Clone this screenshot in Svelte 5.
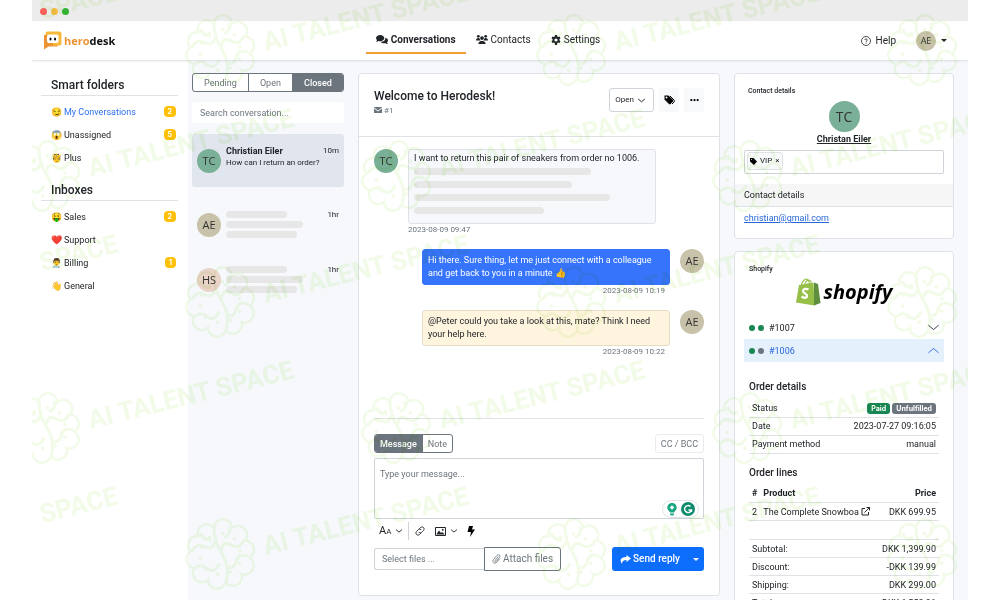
<script>
  const smart = [
    { icon: '😏', label: 'My Conversations', count: 2, active: true },
    { icon: '😱', label: 'Unassigned', count: 5 },
    { icon: '🤴', label: 'Plus' }
  ];
  const inboxes = [
    { icon: '🤑', label: 'Sales', count: 2 },
    { icon: '❤️', label: 'Support' },
    { icon: '👨‍⚕️', label: 'Billing', count: 1 },
    { icon: '👋', label: 'General' }
  ];
  const marks = [];
  for (let row = 0; row < 5; row++) {
    for (let col = -1; col < 3; col++) {
      marks.push({ x: (row % 2 ? 13 : 188) + col * 351, y: 50 + row * 126 });
    }
  }
  const lobes = [[-8, -23], [9, -24], [22, -14], [25, 2], [21, 17], [7, 25], [-9, 24], [-22, 14], [-25, -1], [-20, -14]];
</script>

{#snippet folders(title, items)}
  <section class="folders">
    <h2>{title}</h2>
    <ul>
      {#each items as item}
        <li>
          <a href="#folder" class:active={item.active}><span class="emoji">{item.icon}</span>{item.label}</a>
          {#if item.count}<span class="count">{item.count}</span>{/if}
        </li>
      {/each}
    </ul>
  </section>
{/snippet}

{#snippet chevron(size, up = false, weight = 1.3)}
  <svg width={size} height={size} viewBox="0 0 16 16" fill="none" stroke="currentColor" stroke-width={weight} stroke-linecap="round" stroke-linejoin="round">
    <path d={up ? 'M1 11l7-6 7 6' : 'M1 5l7 6 7-6'} />
  </svg>
{/snippet}

<div class="window">
  <div class="titlebar"><i class="red"></i><i class="yellow"></i><i class="green"></i></div>

  <header>
    <a class="brand" href="#home">
      <svg width="19" height="19" viewBox="0 0 38 38">
        <path fill="#ee9334" d="M2 8h8v16h20v4a3 3 0 0 1-3 3H11l-9 6z" />
        <path fill="#f6b93b" d="M9 1h24a4 4 0 0 1 4 4v20a4 4 0 0 1-4 4H20v-5h8V8H5V5a4 4 0 0 1 4-4z" />
        <rect x="8" y="7" width="23" height="17" rx="4" fill="#fff" />
        <ellipse cx="15" cy="16" rx="2" ry="3" /><ellipse cx="24" cy="16" rx="2" ry="3" />
      </svg>
      <span><b>hero</b>desk</span>
    </a>
    <nav>
      <a class="current" href="#conversations">
        <svg width="12" height="11" viewBox="0 0 26 22"><path fill="currentColor" d="M9 1c5 0 9 3 9 7s-4 7-9 7c-1 0-3 0-4-1-1 1-3 2-5 2 1-1 2-3 2-4-1-1-2-3-2-4 0-4 4-7 9-7zm11 6c4 1 6 3 6 6 0 2-1 3-2 4 0 1 1 3 2 4-2 0-4-1-5-2-5 1-9 0-11-3 7 0 11-4 10-9z" /></svg>
        Conversations
      </a>
      <a href="#contacts">
        <svg width="12" height="11" viewBox="0 0 26 22" fill="currentColor"><circle cx="5" cy="4" r="3" /><circle cx="21" cy="4" r="3" /><circle cx="13" cy="8" r="4" /><path d="M0 13c0-3 2-5 5-5 1 0 2 0 3 1 0 2 1 3 2 4zm26 0c0-3-2-5-5-5-1 0-2 0-3 1 0 2-1 3-2 4zM5 21c0-4 3-7 6-7h4c3 0 6 3 6 7z" /></svg>
        Contacts
      </a>
      <a href="#settings">
        <svg width="10" height="10" viewBox="0 0 20 20"><path fill="currentColor" fill-rule="evenodd" d="M8 0h4l.6 3 1.600.9L17 3l2 3.500-2.200 2v2L19 12.500l-2 3.500-2.800-1-1.600 1L12 20H8l-.6-4-1.600-1L3 16l-2-3.500 2.200-2v-2L1 6.500 3 3l2.800.9L7.400 3zM10 6.800a3.200 3.200 0 1 0 0 6.400 3.200 3.200 0 0 0 0-6.400z" /></svg>
        Settings
      </a>
    </nav>
    <div class="account">
      <a href="#help"><svg width="10" height="10" viewBox="0 0 20 20" fill="none" stroke="currentColor" stroke-width="1.600"><circle cx="10" cy="10" r="9" /><path d="M7.500 8c0-3 5-3 5 0 0 2-2.500 2-2.500 4M10 13.500v2" /></svg>Help</a>
      <button class="me" aria-label="Account"><span class="avatar small sand">AE</span><span class="caret"></span></button>
    </div>
  </header>

  <div class="body">
    <aside class="sidebar">
      {@render folders('Smart folders', smart)}
      {@render folders('Inboxes', inboxes)}
    </aside>

    <section class="list">
      <div class="tabs"><button>Pending</button><button>Open</button><button class="on">Closed</button></div>
      <input class="search" type="search" aria-label="Search conversation" placeholder="Search conversation..." />
      <article class="thread selected">
        <span class="avatar mint">TC</span>
        <div class="grow"><strong>Christian Eiler</strong><p>How can I return an order?</p></div>
        <time>10m</time>
      </article>
      {#each [['AE', 'sand'], ['HS', 'rose']] as [who, tone]}
        <article class="thread">
          <span class="avatar {tone}">{who}</span>
          <div class="grow bars"><i style="width:61px"></i><i style="width:77px"></i><i style="width:71px"></i></div>
          <time>1hr</time>
        </article>
      {/each}
    </section>

    <main class="card">
      <div class="head">
        <div class="grow">
          <h1>Welcome to Herodesk!</h1>
          <p><svg width="8" height="6" viewBox="0 0 16 12"><path fill="currentColor" d="M1 0h14l1 1-8 6-8-6zM0 3l8 6 8-6v9H0z" /></svg> #1</p>
        </div>
        <button class="state">Open {@render chevron(7, false, 2.2)}</button>
        <button class="square" aria-label="Tags"><svg width="11" height="10" viewBox="0 0 22 20"><path fill="currentColor" fill-rule="evenodd" d="M1 1h8l9 9c1 1 1 2 0 3l-5 5c-1 1-2 1-3 0L1 9zm4 2a2 2 0 1 0 0 4 2 2 0 0 0 0-4z" /><path d="M12 2l8 8c1 1 1 2 0 4l-4 4" fill="none" stroke="currentColor" stroke-width="2" /></svg></button>
        <button class="square" aria-label="More"><svg width="9" height="4" viewBox="0 0 20 8" fill="currentColor"><circle cx="3" cy="4" r="2.500" /><circle cx="10" cy="4" r="2.500" /><circle cx="17" cy="4" r="2.500" /></svg></button>
      </div>

      <div class="messages">
        <div class="msg">
          <span class="avatar mint">TC</span>
          <div class="wrap">
            <div class="bubble long"><p>I want to return this pair of sneakers from order no 1006.</p>
              <div class="bars wide"><i style="width:75%"></i><i style="width:67%"></i><i style="width:83%"></i><i style="width:55%"></i></div></div>
            <time>2023-08-09 09:47</time>
          </div>
        </div>
        <div class="msg out">
          <div class="wrap"><div class="bubble blue"><p>Hi there. Sure thing, let me just connect with a colleague and get back to you in a minute <span class="emoji">👍</span></p></div><time>2023-08-09 10:19</time></div>
          <span class="avatar sand">AE</span>
        </div>
        <div class="msg out">
          <div class="wrap"><div class="bubble cream"><p>@Peter could you take a look at this, mate? Think I need your help here.</p></div><time>2023-08-09 10:22</time></div>
          <span class="avatar sand">AE</span>
        </div>
      </div>

      <form class="composer">
        <div class="row">
          <div class="tabs compact"><button type="button" class="on">Message</button><button type="button">Note</button></div>
          <button type="button" class="cc">CC / BCC</button>
        </div>
        <div class="editor">
          <textarea aria-label="Message" placeholder="Type your message..."></textarea>
          <span class="helper">
            <svg width="12" height="14" viewBox="0 0 24 28"><path fill="#15a683" d="M12 2a9 9 0 0 1 6 16l-2 3H8l-2-3A9 9 0 0 1 12 2zM8 23h8v2l-2 2h-4l-2-2z" /><path fill="#fff" d="M12 6l2 3 3 2-3 2-2 3-2-3-3-2 3-2z" /></svg>
            <svg width="14" height="14" viewBox="0 0 28 28"><circle cx="14" cy="14" r="14" fill="#0d8a6b" /><path d="M19 9a7 7 0 1 0 2 7H15m6-1v5" fill="none" stroke="#fff" stroke-width="2.800" /></svg>
          </span>
        </div>
        <div class="tools">
          <button type="button" aria-label="Text size"><span class="aa">A<small>A</small></span>{@render chevron(6, false, 2.5)}</button>
          <span class="rule"></span>
          <button type="button" aria-label="Link"><svg width="10" height="10" viewBox="0 0 20 20" fill="none" stroke="currentColor" stroke-width="1.700" stroke-linecap="round"><path d="M8 6l3-3a4.200 4.200 0 0 1 6 6l-4 4a4 4 0 0 1-5 0M12 14l-3 3a4.200 4.200 0 0 1-6-6l4-4a4 4 0 0 1 5 0" /></svg></button>
          <button type="button" aria-label="Image"><svg width="11" height="9" viewBox="0 0 22 18"><path d="M1 1h20v16H1z" fill="none" stroke="currentColor" stroke-width="2" /><path fill="currentColor" d="M3 14l5-7 4 5 2-2 5 4v1H3z" /><circle cx="15.500" cy="5.500" r="1.800" fill="currentColor" /></svg>{@render chevron(6, false, 2.5)}</button>
          <button type="button" aria-label="Quick reply"><svg width="8" height="11" viewBox="0 0 16 22"><path fill="#000" d="M4 0h8l-2 7h6L6 22l2-10H1z" /></svg></button>
        </div>
        <div class="row">
          <div class="files"><input type="text" aria-label="Files" placeholder="Select files ..." /><button type="button"><svg width="9" height="10" viewBox="0 0 18 20" fill="none" stroke="currentColor" stroke-width="1.700" stroke-linecap="round"><path d="M12 6l-6 7c-1 2 1 3 2 2l7-8c3-4-2-7-5-4l-7 8c-4 5 2 10 6 6l6-7" /></svg>Attach files</button></div>
          <div class="send"><button type="button"><svg width="11" height="9" viewBox="0 0 22 18"><path fill="currentColor" d="M13 0l9 7-9 7v-4C7 10 4 12 4 18-2 10 2 4 13 4z" /></svg>Send reply</button><button type="button" class="drop" aria-label="More send options"><span class="caret"></span></button></div>
        </div>
      </form>
    </main>

    <aside class="details">
      <section class="card contact">
        <h3 class="tag">Contact details</h3>
        <div class="person"><span class="avatar large mint">TC</span><a href="#contact">Christan Eiler</a></div>
        <div class="tagbox"><span class="chip"><svg width="7" height="7" viewBox="0 0 14 14"><path fill="#000" fill-rule="evenodd" d="M0 0h7l7 7-6 7-8-7zm3 2a1 1 0 1 0 0 2 1 1 0 0 0 0-2z" /></svg>VIP<button aria-label="Remove VIP">×</button></span></div>
        <h4>Contact details</h4>
        <a class="mail" href="mailto:christian@gmail.com">christian@gmail.com</a>
      </section>

      <section class="card shop">
        <h3 class="tag">Shopify</h3>
        <div class="shopify">
          <svg width="25" height="28" viewBox="0 0 50 56"><path fill="#95bf47" d="M6 14l29-5 2 46L0 49z" /><path fill="#5e8e3e" d="M36 9l8 3 5 38-13 5z" /><path d="M11 14c2-9 8-14 12-11s4 6 4 9M17 13c3-9 10-13 14-4" fill="none" stroke="#95bf47" stroke-width="2.200" /><path d="M25 23c-5-3-11-1-11 3 0 5 9 5 8 10-1 5-7 4-11 1" fill="none" stroke="#fff" stroke-width="4.500" /></svg>
          <span>shopify</span>
        </div>
        <button class="order"><i class="dot"></i><i class="dot"></i><span>#1007</span>{@render chevron(11)}</button>
        <button class="order open"><i class="dot"></i><i class="dot grey"></i><span>#1006</span>{@render chevron(11, true)}</button>
        <div class="info">
          <h5>Order details</h5>
          <table><tbody>
            <tr><td>Status</td><td><span class="badge">Paid</span> <span class="badge grey">Unfulfilled</span></td></tr>
            <tr><td>Date</td><td>2023-07-27 09:16:05</td></tr>
            <tr><td>Payment method</td><td>manual</td></tr>
          </tbody></table>
          <h5>Order lines</h5>
          <table class="lines">
            <thead><tr><th>#</th><th>Product</th><th>Price</th></tr></thead>
            <tbody><tr><td>2</td><td>The Complete Snowboa <svg width="9" height="9" viewBox="0 0 18 18" fill="none" stroke="currentColor" stroke-width="2"><path d="M8 3H2v13h13v-6M11 1h6v6M17 1L7 11" /></svg></td><td>DKK 699.95</td></tr></tbody>
          </table>
          <table class="totals"><tbody>
            <tr><td>Subtotal:</td><td>DKK 1,399.90</td></tr>
            <tr><td>Discount:</td><td>-DKK 139.99</td></tr>
            <tr><td>Shipping:</td><td>DKK 299.00</td></tr>
            <tr><td>Total:</td><td>DKK 1,558.91</td></tr>
          </tbody></table>
        </div>
      </section>
    </aside>
  </div>

  <svg class="watermark" aria-hidden="true">
    {#each marks as m}
      <g transform="translate({m.x} {m.y}) rotate(-14)">
        <g fill="none" stroke="#f1fbe8" stroke-width="5">
          {#each lobes as [x, y]}<circle cx={x} cy={y} r="8" />{/each}
        </g>
        <g fill="#fff">
          {#each lobes as [x, y]}<circle cx={x} cy={y} r="8" />{/each}
          <circle r="24" />
        </g>
        <g fill="none" stroke="#f1fbe8" stroke-width="3">
          <path d="M1-29q-4 14 1 29t-3 29M-27-9q7-8 14-2t11-2M27-8q-7 9-14 2t-10 2M-28 8q7-4 12 3t13-2M27 9q-9-6-13 2T3 14M-14-25q1 8 9 9M15-24q1 8-7 9" />
        </g>
        <g fill="#f1fbe8">{#each lobes as [x, y]}<circle cx={x * 0.8} cy={y * 0.8} r="1.800" />{/each}</g>
        <text x="44" y="12">AI TALENT SPACE</text>
      </g>
    {/each}
  </svg>
</div>

<style>
  :global(body) { margin: 0; background: #fff; }
  * { box-sizing: border-box; }
  h1, h2, h3, h4, h5, p, ul { margin: 0; padding: 0; font-weight: 500; }
  p, ul { font-weight: 400; }
  ul { list-style: none; }
  button, input, textarea { font: inherit; color: inherit; margin: 0; }
  button { background: none; border: 0; padding: 0; cursor: pointer; }
  a { color: inherit; text-decoration: none; }
  svg { flex: none; }
  .window { position: relative; height: 100vh; margin: 0 32px; display: flex; flex-direction: column; overflow: hidden; background: #f6f8fb; color: #212529; font: 9px/14px Roboto, sans-serif; border-radius: 0 0 2px 2px; }
  .titlebar { display: flex; gap: 4px; align-items: center; height: 21px; flex: none; padding: 1px 8px 0; background: #ececec; }
  .titlebar i { width: 7px; height: 7px; border-radius: 50%; }
  .red { background: #f9615a; } .yellow { background: #f7bd45; } .green { background: #35b233; }
  header { display: grid; grid-template-columns: 1fr auto 1fr; align-items: center; height: 39px; flex: none; padding: 0 21px 0 11px; background: #fff; box-shadow: 0 1px 2px #d9dce3; z-index: 1; }
  .brand { display: flex; align-items: center; gap: 2px; font: 700 11px/16px "Open Sans", sans-serif; color: #111; }
  .brand b { color: #ee9334; font-weight: 700; }
  nav { display: flex; align-self: end; margin: 0 14px 6px 0; font-size: 10px; }
  nav a { display: flex; align-items: center; gap: 3px; height: 33px; padding: 6px 10px 0; border-bottom: 2px solid transparent; }
  .current { font-weight: 700; border-color: #f3a033; }
  .account { justify-self: end; display: flex; align-items: center; gap: 20px; font-size: 10px; }
  .account a { display: flex; align-items: center; gap: 5px; }
  .me { display: flex; align-items: center; gap: 5px; }
  .caret { border: 3px solid transparent; border-top-color: currentColor; border-bottom: 0; }
  .avatar { width: 24px; height: 24px; border-radius: 50%; display: grid; place-items: center; flex: none; font: 11px/12px "Open Sans", sans-serif; color: #333; }
  .small { width: 20px; height: 20px; font-size: 9px; }
  .large { width: 31px; height: 31px; font-size: 14px; }
  .mint { background: #7ab097; } .sand { background: #c7c2a9; } .rose { background: #ead3c8; }
  .body { flex: 1; min-height: 0; display: flex; }
  .sidebar { width: 156px; flex: none; padding: 16px 10px 0 9px; background: #fff; }
  .folders { margin-bottom: 12px; }
  h2 { padding: 0 10px 1px; border-bottom: 1px solid #dee2e6; font-size: 12px; line-height: 18px; }
  .folders ul { padding: 4px 2px 0 10px; }
  .folders li { display: flex; justify-content: space-between; align-items: center; height: 23px; }
  .folders a { display: flex; align-items: center; gap: 2px; }
  .emoji { font-size: 9px; }
  .active { color: #2f6fed; }
  .count { background: #ffc107; color: #fff; font: 700 7px/11px Inter, sans-serif; padding: 0 4px; border-radius: 4px; }
  .list { width: 170px; flex: none; padding: 13px 14px 0 4px; }
  .tabs { display: flex; border: 1px solid #6c757d; border-radius: 3px; overflow: hidden; color: #6c757d; background: #fff; }
  .tabs button { flex: 1 1 auto; height: 17px; border-left: 1px solid #6c757d; }
  .tabs button:first-child { border-left: 0; }
  .tabs .on { background: #6c757d; color: #fff; font-weight: 500; }
  .search { display: block; width: 100%; height: 21px; margin: 10px 0 11px; padding: 0 8px; border: 0; border-radius: 3px; background: #fff; outline: 0; }
  ::placeholder { color: #6c757d; opacity: 1; }
  .thread { display: flex; gap: 5px; align-items: center; height: 53px; padding: 0 5px; margin-bottom: 2px; border-radius: 3px; font-size: 8px; line-height: 11px; }
  .thread strong { font-size: 9px; font-weight: 700; }
  .thread time { align-self: start; margin-top: 11px; }
  .selected { background: #e1e5ed; margin-bottom: 11px; }
  .selected .grow { padding-bottom: 8px; }
  .selected p { white-space: nowrap; }
  .grow { flex: 1; min-width: 0; }
  .bars { display: grid; gap: 3px; }
  .bars i { height: 7px; border-radius: 4px; background: #e7e7e7; }
  .card { background: #fff; border: 1px solid #dee2e6; border-radius: 4px; }
  main { flex: 1; min-width: 0; margin: 13px 0 4px; display: flex; flex-direction: column; }
  .head { display: flex; align-items: start; gap: 5px; padding: 14px 15px 20px; border-bottom: 1px solid #dee2e6; }
  h1 { font-size: 12px; line-height: 17px; }
  .head p { font-size: 8px; line-height: 11px; color: #6c757d; }
  .state { display: flex; align-items: center; gap: 4px; height: 24px; padding: 0 8px 0 5px; border: 1px solid #ced4da; border-radius: 3px; font-size: 8px; }
  .square { display: grid; place-items: center; width: 20px; height: 24px; border-radius: 3px; background: #f8f9fa; color: #000; }
  .messages { flex: 1; padding: 12px 15px; display: grid; align-content: start; gap: 14px; }
  .msg { display: flex; gap: 10px; align-items: start; }
  .out { justify-content: end; }
  .wrap { width: 248px; }
  .out .wrap { text-align: right; }
  .bubble { text-align: left; padding: 4px 5px; border: 1px solid #dee2e6; border-radius: 3px; background: #f6f8fb; line-height: 13px; }
  .long { padding-top: 2px; }
  .blue { background: #3674fb; border-color: #3674fb; color: #fff; }
  .cream { background: #fff4de; border-color: #e5dcc8; }
  .wide { margin: 3px 0 5px; gap: 6px; }
  .msg time { display: block; font-size: 8px; line-height: 11px; color: #6c757d; }
  .out time { padding-right: 5px; }
  .composer { margin: 0 15px 24px; padding-top: 15px; border-top: 1px solid #dee2e6; }
  .row { display: flex; justify-content: space-between; align-items: center; }
  .compact button { padding: 0 5px; }
  .cc { height: 19px; padding: 0 5px; border: 1px solid #e9ecef; border-radius: 3px; color: #6c757d; }
  .editor { position: relative; margin: 5px 0 3px; }
  textarea { display: block; width: 100%; height: 61px; padding: 8px 5px; border: 1px solid #ced4da; border-radius: 2px; resize: none; background: #fff; }
  .helper { position: absolute; right: 5px; bottom: 1px; display: flex; align-items: center; gap: 3px; padding: 1px 3px; border: 1px solid #e1e4e8; border-radius: 9px; background: #fff; }
  .tools { display: flex; align-items: center; height: 18px; gap: 10px; padding-left: 5px; }
  .tools button { display: flex; align-items: center; gap: 5px; }
  .aa { font-size: 11px; } .aa small { font-size: 8px; }
  .rule { width: 1px; height: 18px; background: #ced4da; margin: 0 -4px; }
  .composer .row:last-child { margin-top: 7px; }
  .files, .send { display: flex; align-items: center; }
  .files input { width: 110px; height: 22px; padding: 0 7px; border: 1px solid #ced4da; border-right: 0; border-radius: 3px 0 0 3px; }
  .files button { display: flex; align-items: center; gap: 2px; height: 24px; padding: 0 7px; border: 1px solid #6c757d; border-radius: 0 3px 3px 0; color: #6c757d; font-size: 10px; }
  .send { background: #0d6efd; color: #fff; border-radius: 3px; font-size: 10px; font-weight: 500; }
  .send button { display: flex; align-items: center; gap: 2px; height: 24px; padding: 0 8px; }
  .send .drop { padding: 0 5px; }
  .details { width: 248px; flex: none; padding: 13px 14px 0; overflow: hidden; }
  .tag { font-size: 7px; line-height: 9px; }
  .contact { height: 166px; margin-bottom: 12px; padding: 13px 9px 0; }
  .contact .tag { padding-left: 4px; }
  .person { display: grid; justify-items: center; padding-top: 5px; font-weight: 700; }
  .person a { text-decoration: underline; }
  .tagbox { height: 24px; margin-top: 4px; padding: 1px 2px; border: 1px solid #ced4da; border-radius: 2px; }
  .chip { display: inline-flex; align-items: center; gap: 3px; height: 18px; padding: 0 2px; border: 1px solid #dee2e6; border-radius: 3px; background: #f8f9fa; font-size: 8px; }
  h4 { margin: 10px -9px 4px; padding: 4px 9px; background: #f6f6f7; border-bottom: 1px solid #dee2e6; font-size: 9px; font-weight: 400; }
  .mail { color: #2767d8; text-decoration: underline; }
  .shop { padding: 13px 9px; }
  .shop .tag { padding-left: 5px; }
  .shopify { display: flex; justify-content: center; align-items: center; gap: 3px; height: 28px; margin: 4px 0 10px; font: italic 700 20px/26px "Open Sans", sans-serif; color: #000; }
  .order { display: flex; align-items: center; gap: 3px; width: 100%; height: 23px; padding: 0 5px; text-align: left; }
  .order span { flex: 1; padding-left: 2px; }
  .open { background: #e5f0fd; color: #2767d8; }
  .dot { width: 6px; height: 6px; border-radius: 50%; background: #198754; }
  .grey { background: #6c757d; }
  .info { padding: 18px 5px 0; }
  h5 { font-size: 10px; line-height: 14px; margin-bottom: 5px; }
  table { width: 100%; border-collapse: collapse; margin-bottom: 12px; }
  td, th { height: 18px; padding: 0 3px; text-align: left; border-bottom: 1px solid #dee2e6; white-space: nowrap; }
  th { font-weight: 700; }
  td:last-child, th:last-child { text-align: right; }
  .lines { margin-bottom: 18px; }
  .lines td:first-child, .lines th:first-child { width: 11px; }
  .lines svg { vertical-align: -1px; }
  .totals { border-top: 1px solid #dee2e6; }
  .badge { display: inline-block; padding: 0 4px; border-radius: 3px; color: #fff; font: 700 7px/11px Inter, sans-serif; background: #198754; }
  .badge.grey { background: #6c757d; }
  .watermark { position: absolute; inset: 0; width: 100%; height: 100%; pointer-events: none; mix-blend-mode: multiply; z-index: 2; }
  .watermark text { font: 700 26px Roboto, sans-serif; fill: #f1fbe8; }
</style>
